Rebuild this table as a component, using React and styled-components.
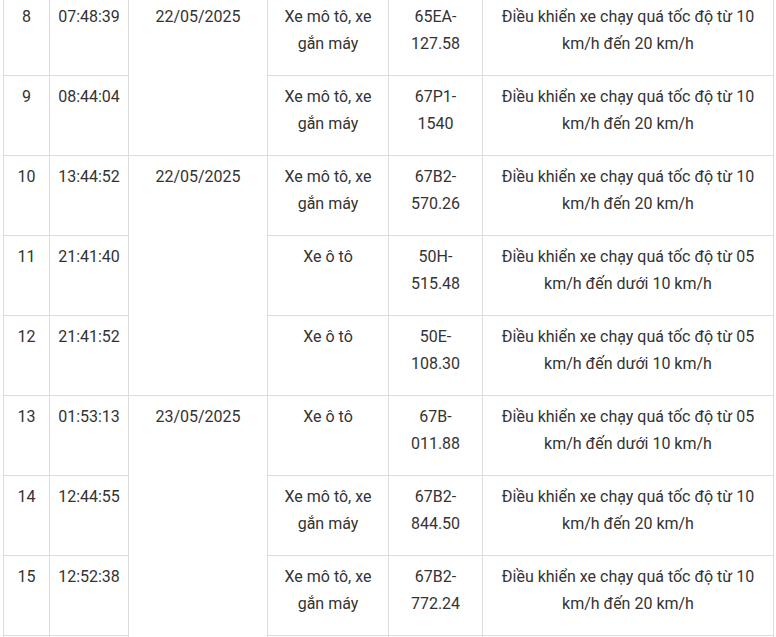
import React from "react";
import styled, { createGlobalStyle } from "styled-components";

const GlobalStyle = createGlobalStyle`
  html, body {
    margin: 0;
    padding: 0;
    overflow: hidden;
    background: #fff;
  }
  body {
    font-family: Roboto, "Noto Sans", "Liberation Sans", sans-serif;
  }
`;

const widths = [46, 79, 139, 121, 94, null];

const rows = [
  { no: 8, time: "07:48:39", date: "22/05/2025", span: 2, type: "Xe mô tô, xe gắn máy", plate: "65EA-127.58", fault: "Điều khiển xe chạy quá tốc độ từ 10 km/h đến 20 km/h" },
  { no: 9, time: "08:44:04", type: "Xe mô tô, xe gắn máy", plate: "67P1-1540", fault: "Điều khiển xe chạy quá tốc độ từ 10 km/h đến 20 km/h" },
  { no: 10, time: "13:44:52", date: "22/05/2025", span: 3, type: "Xe mô tô, xe gắn máy", plate: "67B2-570.26", fault: "Điều khiển xe chạy quá tốc độ từ 10 km/h đến 20 km/h" },
  { no: 11, time: "21:41:40", type: "Xe ô tô", plate: "50H-515.48", fault: "Điều khiển xe chạy quá tốc độ từ 05 km/h đến dưới 10 km/h" },
  { no: 12, time: "21:41:52", type: "Xe ô tô", plate: "50E-108.30", fault: "Điều khiển xe chạy quá tốc độ từ 05 km/h đến dưới 10 km/h" },
  { no: 13, time: "01:53:13", date: "23/05/2025", span: 4, type: "Xe ô tô", plate: "67B-011.88", fault: "Điều khiển xe chạy quá tốc độ từ 05 km/h đến dưới 10 km/h" },
  { no: 14, time: "12:44:55", type: "Xe mô tô, xe gắn máy", plate: "67B2-844.50", fault: "Điều khiển xe chạy quá tốc độ từ 10 km/h đến 20 km/h" },
  { no: 15, time: "12:52:38", type: "Xe mô tô, xe gắn máy", plate: "67B2-772.24", fault: "Điều khiển xe chạy quá tốc độ từ 10 km/h đến 20 km/h" },
  // next row only shows its top border at the bottom edge
  { no: "", time: "", type: "", plate: "", fault: "" },
];

const Page = styled.div`
  padding-left: 3px;
  margin-top: -5px;
`;

const Table = styled.table`
  width: 771px;
  table-layout: fixed;
  border-collapse: collapse;
  color: #333;
  font-size: 16px;
  line-height: 27px;
`;

const Col = styled.col`
  width: ${(p) => (p.$w ? `${p.$w}px` : "auto")};
`;

const Row = styled.tr`
  height: 80px;
`;

const Cell = styled.td`
  border: 1px solid #dcdcdc;
  padding: 7px 8px 5px;
  text-align: center;
  vertical-align: top;
  word-wrap: break-word;
`;

const App = () => {
  return (
    <Page>
      <GlobalStyle />
      <Table>
        <colgroup>
          {widths.map((w, i) => (
            <Col key={i} $w={w} />
          ))}
        </colgroup>
        <tbody>
          {rows.map((r, i) => (
            <Row key={i}>
              <Cell>{r.no}</Cell>
              <Cell>{r.time}</Cell>
              {r.date && <Cell rowSpan={r.span}>{r.date}</Cell>}
              <Cell>{r.type}</Cell>
              <Cell>{r.plate}</Cell>
              <Cell>{r.fault}</Cell>
            </Row>
          ))}
        </tbody>
      </Table>
    </Page>
  );
};

export default App;
